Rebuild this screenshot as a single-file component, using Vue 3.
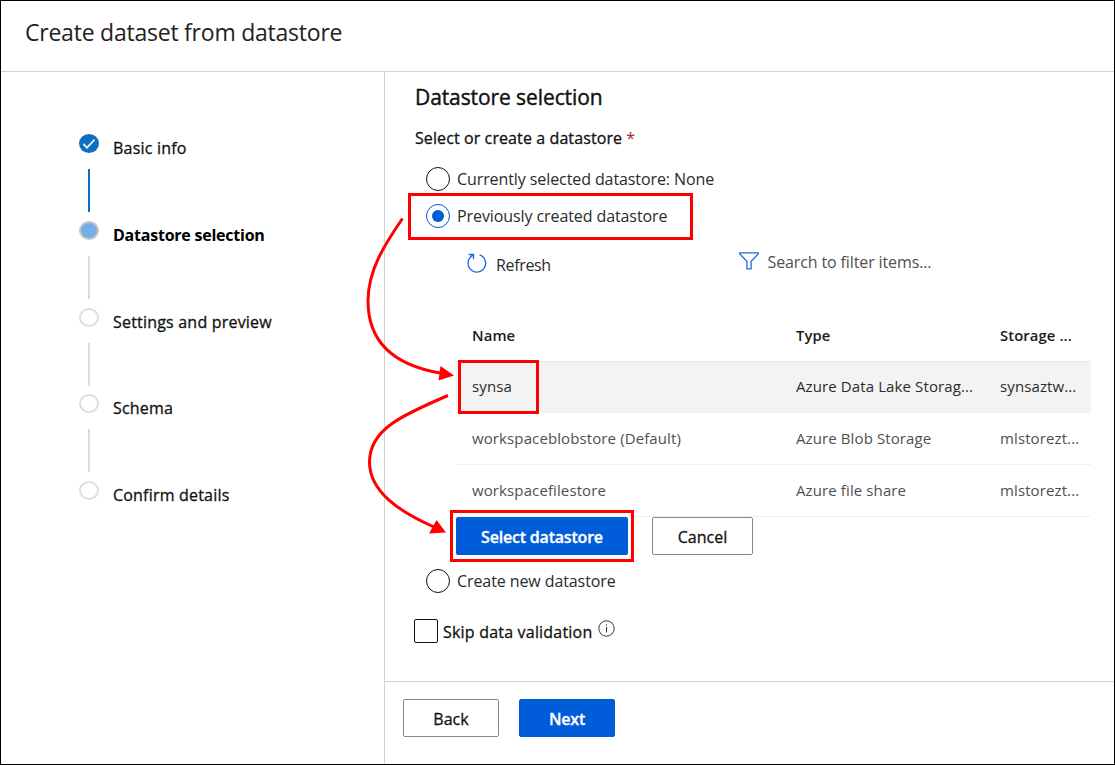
<script setup>
const steps = [
  { label: 'Basic info', state: 'done' },
  { label: 'Datastore selection', state: 'current' },
  { label: 'Settings and preview', state: 'todo' },
  { label: 'Schema', state: 'todo' },
  { label: 'Confirm details', state: 'todo' },
]

const rows = [
  { name: 'synsa', type: 'Azure Data Lake Storag...', storage: 'synsaztw...', selected: true },
  { name: 'workspaceblobstore (Default)', type: 'Azure Blob Storage', storage: 'mlstorezt...' },
  { name: 'workspacefilestore', type: 'Azure file share', storage: 'mlstorezt...' },
]
</script>

<template>
  <div class="window">
    <header class="titlebar"><h1>Create dataset from datastore</h1></header>
    <div class="body">
      <nav class="sidebar">
        <div v-for="s in steps" :key="s.label" class="step" :class="s.state">
          <div class="rail">
            <span class="dot">
              <svg v-if="s.state === 'done'" width="20" height="19" viewBox="0 0 20 19"><path d="M4.4 10 8 13.6 15.6 5.6" fill="none" stroke="#e4f0fa" stroke-width="1.8" /></svg>
            </span>
            <span class="line"></span>
          </div>
          <span class="step-label">{{ s.label }}</span>
        </div>
      </nav>
      <section class="pane">
        <main class="content">
          <h2>Datastore selection</h2>
          <div class="field-label"><span>Select or create a datastore</span><span class="req">*</span></div>
          <label class="radio first"><span class="ring"></span><span>Currently selected datastore: None</span></label>
          <label class="radio on"><span class="ring"></span><span>Previously created datastore</span></label>
          <div class="toolbar">
            <svg class="refresh-icon" width="20" height="20" viewBox="0 0 20 20" fill="none" stroke="#2068e0" stroke-width="1.3"><path d="M12.6 1.9A8.800 8.800 0 1 1 6.300 2.200M1.600 1.500H6.500V6.200" /></svg>
            <span class="refresh">Refresh</span>
            <div class="filter">
              <svg width="20" height="18" viewBox="0 0 20 18" fill="none" stroke="#2068e0" stroke-width="1.3"><path d="M.8.9H19.2V2L12.1 9.2V16.8H7.9V9.2L.8 2Z" /></svg>
              <span class="search">Search to filter items...</span>
            </div>
          </div>
          <div class="table">
            <div class="tr th"><span>Name</span><span>Type</span><span>Storage ...</span></div>
            <div v-for="r in rows" :key="r.name" class="tr" :class="{ selected: r.selected }">
              <span>{{ r.name }}</span><span>{{ r.type }}</span><span>{{ r.storage }}</span>
            </div>
          </div>
          <div class="actions">
            <button class="btn primary select">Select datastore</button>
            <button class="btn cancel">Cancel</button>
          </div>
          <label class="radio last"><span class="ring"></span><span>Create new datastore</span></label>
          <label class="check"><span class="box"></span><span class="check-text">Skip data validation</span>
            <svg class="info" width="17" height="17" viewBox="0 0 17 17" fill="none" stroke="#333"><circle cx="8.5" cy="8.5" r="7.7" /><path d="M8.5 7V12.5M8.5 4.3V5.6" /></svg>
          </label>
        </main>
        <footer class="footer">
          <button class="btn">Back</button>
          <button class="btn primary">Next</button>
        </footer>
      </section>
    </div>
    <svg class="callouts" width="1115" height="765" viewBox="0 0 1115 765" fill="none" stroke="#f00" stroke-width="3">
      <rect x="409.500" y="194.500" width="282" height="44" />
      <rect x="459.500" y="361.500" width="78" height="51" />
      <rect x="451.500" y="511.500" width="181" height="49" />
      <path d="M402.500 218.500C385 244 368 270 368 301C368 342 394 365 440 373" />
      <path d="M448 395.500C400 416 369.500 430 369.500 462C369.500 492 400 512 434 527" />
      <path d="M440.500 366 454 375.500 438.500 380.500ZM436.500 520 446 532.500 429 533.500Z" fill="#f00" stroke="none" />
    </svg>
  </div>
</template>

<style>
body { margin: 0; background: #fff; }
</style>

<style scoped>
* { box-sizing: border-box; }
.window { position: relative; width: 1115px; height: 765px; border: 1px solid #000; display: flex; flex-direction: column; font-family: "Open Sans", "Noto Sans", sans-serif; font-size: 16px; color: #111; overflow: hidden; white-space: nowrap; }
.titlebar { height: 71px; border-bottom: 1px solid #d2d2d2; padding: 15px 0 0 24px; flex: none; }
h1 { margin: 0; font-size: 23px; line-height: 32px; font-weight: 400; letter-spacing: -.23px; color: #222; }
.body { flex: 1; display: flex; min-height: 0; }
.sidebar { width: 383px; padding: 62px 0 0 78px; }
.step { display: flex; height: 86.800px; gap: 14px; }
.step-label, .field-label, .check-text { -webkit-text-stroke: .3px currentColor; letter-spacing: .2px; }
.rail { width: 20px; display: flex; flex-direction: column; align-items: center; }
.dot { width: 20px; height: 19px; flex: none; border: 2px solid #dfdfdf; border-radius: 50%; display: flex; }
.done .dot { border: 0; background: #106ebe; }
.current .dot { background: #71afe5; border-color: #c8c6c4; }
.line { width: 2px; height: 43px; margin-top: 16px; background: #dcdcdc; }
.done .line { background: #106ebe; }
.step:nth-child(5) .line { display: none; }
.step-label { line-height: 24px; padding-top: 2px; }
.current .step-label { font-weight: 700; letter-spacing: -.23px; color: #000; -webkit-text-stroke: 0; }
.pane { flex: 1; border-left: 1px solid #d2d2d2; display: flex; flex-direction: column; }
.content { height: 609px; padding: 10px 0 0 29px; }
h2 { margin: 0 0 0 1px; font-size: 21px; line-height: 30px; font-weight: 400; letter-spacing: -.09px; -webkit-text-stroke: .4px currentColor; }
.field-label { margin: 14px 0 0 1px; line-height: 24px; letter-spacing: .1px; display: flex; gap: 4px; }
.req { color: #a4262c; -webkit-text-stroke: 0; }
.radio { display: flex; align-items: center; gap: 7px; height: 24px; margin-left: 12px; letter-spacing: -.09px; color: #2b2b2b; }
.radio.first { margin-top: 17px; }
.radio.on { margin-top: 13px; }
.radio.last { margin-top: 14px; }
.ring { width: 24px; height: 24px; border: 1px solid #111; border-radius: 50%; display: flex; align-items: center; justify-content: center; }
.on .ring { border-color: #015cda; }
.on .ring::after { content: ""; width: 12px; height: 12px; border-radius: 50%; background: #015cda; }
.toolbar { display: flex; height: 24px; margin: 25px 0 0 53px; line-height: 24px; }
.refresh { margin-left: 9px; width: 55px; letter-spacing: -.35px; color: #2b2b2b; }
.filter { display: flex; gap: 9px; margin: -1px 0 0 187.500px; }
.search { margin-top: -2px; letter-spacing: -.12px; color: #505050; }
.table { margin: 33px 0 0 42px; width: 635px; font-size: 15px; letter-spacing: .11px; }
.tr { display: grid; grid-template-columns: 324px 204px 1fr; padding-left: 16px; height: 52px; line-height: 50px; border-bottom: 1px solid #f0f0f0; color: #505050; }
.th { color: #1a1a1a; font-weight: 600; border-color: #e6e6e6; font-size: 14.800px; }
.selected { height: 51px; line-height: 48px; background: #f3f3f3; border-color: #f3f3f3; color: #2b2b2b; }
.actions { display: flex; gap: 24px; margin-left: 42px; }
.btn { height: 38px; width: 96px; padding: 2px 0 0; border: 1px solid #8a8886; border-radius: 2px; background: #fff; font: 400 16px "Open Sans", sans-serif; color: #111; -webkit-text-stroke: .3px currentColor; }
.primary { background: #015cda; border-color: #015cda; color: #fff; font-weight: 600; letter-spacing: -.2px; }
.select { width: 172px; }
.cancel { width: 101px; }
.check { display: flex; align-items: center; height: 24px; margin-top: 26px; }
.check-text { padding-top: 2px; }
.box { width: 24px; height: 24px; border: 1px solid #111; border-radius: 2px; margin-right: 5px; }
.info { margin: -5px 0 0 6px; }
.footer { border-top: 1px solid #d2d2d2; flex: 1; padding: 17px 0 0 18px; display: flex; gap: 20px; }
.callouts { position: absolute; left: -1px; top: -1px; pointer-events: none; }
</style>
